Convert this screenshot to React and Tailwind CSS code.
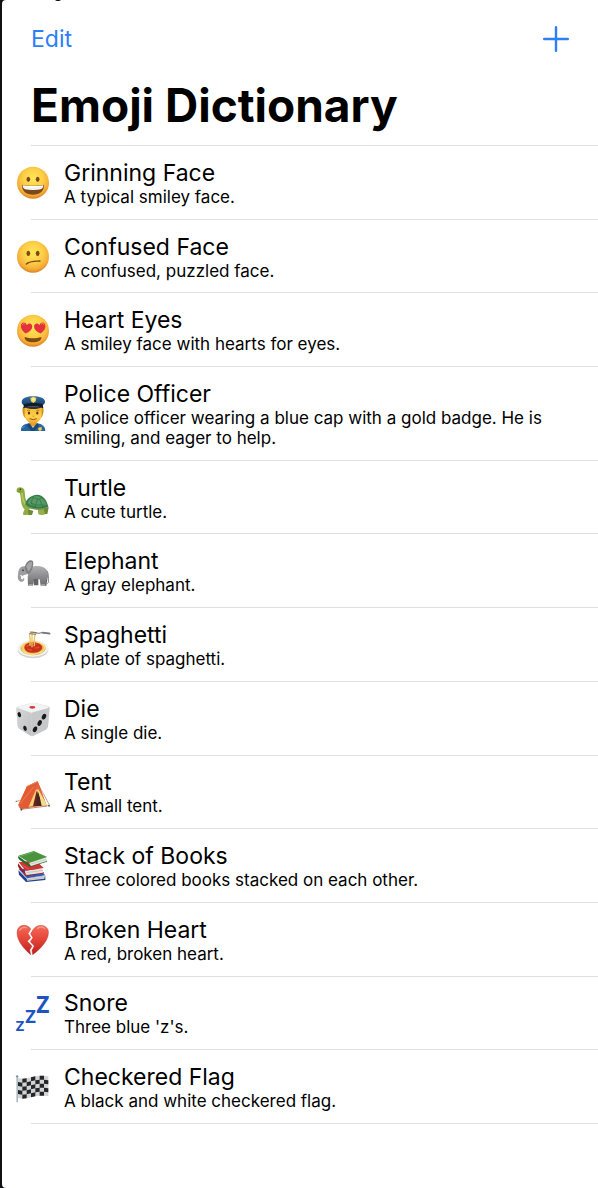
import React from "react";

function FaceBase({ id, children }) {
  return (
    <>
      <defs>
        <radialGradient id={id} cx="50%" cy="38%" r="62%">
          <stop offset="0" stopColor="#ffe65a" />
          <stop offset="0.5" stopColor="#fdcf47" />
          <stop offset="0.82" stopColor="#f5ae38" />
          <stop offset="1" stopColor="#dd8224" />
        </radialGradient>
      </defs>
      <circle cx="54" cy="56" r="48" fill={`url(#${id})`} />
      <g transform="translate(1 1)">{children}</g>
    </>
  );
}

function Grinning() {
  return (
    <FaceBase id="face-grin">
      <ellipse cx="39" cy="45" rx="5.5" ry="8" fill="#7a4a12" />
      <ellipse cx="67" cy="45" rx="5.5" ry="8" fill="#7a4a12" />
      <path d="M20 61C30 65 76 65 86 61C87 80 73 91 53 91C33 91 19 80 20 61Z" fill="#7b4a16" />
      <path d="M22 63C32 66 74 66 84 63C84 70 80 74 76 75C62 78 44 78 30 75C26 74 22 70 22 63Z" fill="#fff" />
      <path d="M22 68C40 73 66 73 84 68" stroke="#d5d7dc" strokeWidth="1.5" fill="none" />
    </FaceBase>
  );
}

function Confused() {
  return (
    <FaceBase id="face-confused">
      <ellipse cx="39" cy="45" rx="5.5" ry="8" fill="#7a4a12" />
      <ellipse cx="67" cy="45" rx="5.5" ry="8" fill="#7a4a12" />
      <path d="M33 77C43 68 60 69 74 68" stroke="#7a4a12" strokeWidth="4" strokeLinecap="round" fill="none" />
    </FaceBase>
  );
}

function HeartEyes() {
  const heart = "M0 17C-12 10-18 2-17-7C-16-16-5-19 0-9C5-19 16-16 17-7C18 2 12 10 0 17Z";
  return (
    <FaceBase id="face-hearts">
      <path d={heart} transform="translate(33 47) rotate(9)" fill="#e3323c" />
      <path d={heart} transform="translate(74 47) rotate(-9)" fill="#e3323c" />
      <path d="M21 38C23 32 28 33 29 36M77 36C81 31 86 33 86 38" stroke="#ff716c" strokeWidth="3" fill="none" />
      <path d="M28 74C42 79 64 79 78 74C79 84 68 90 53 90C38 90 27 84 28 74Z" fill="#804b13" />
    </FaceBase>
  );
}

function Police() {
  return (
    <>
      <defs>
        <linearGradient id="cap" x1="0" y1="0" x2="0" y2="1">
          <stop offset="0" stopColor="#326fa8" />
          <stop offset="1" stopColor="#173b66" />
        </linearGradient>
        <linearGradient id="skin" x1="0" y1="0" x2="0" y2="1">
          <stop offset="0" stopColor="#f5b72d" />
          <stop offset="0.6" stopColor="#ffd34c" />
          <stop offset="1" stopColor="#eaa12e" />
        </linearGradient>
      </defs>
      <path d="M24 36C20 48 24 63 31 70H77C84 63 88 48 84 36Z" fill="#d38c1d" />
      <path d="M43 70H66V94H43Z" fill="#d99023" />
      <path d="M18 108C18 94 23 89 42 85L54 98L67 85C85 89 90 94 91 108Z" fill="#26659d" />
      <path d="M42 84L54 101L67 84L72 92L59 108H49L36 92Z" fill="#184979" />
      <path d="M45 82L54 96L64 82Z" fill="#e7a22e" />
      <path d="M29 36H80V58C80 73 68 86 54 86C40 86 29 73 29 58Z" fill="url(#skin)" />
      <path d="M20 21C20 8 38 4 55 4C72 4 90 9 90 21C90 26 84 31 80 33H29C24 30 20 26 20 21Z" fill="url(#cap)" />
      <path d="M27 28C42 23 68 23 83 28L85 40C68 32 42 32 25 40Z" fill="#101b2b" />
      <path d="M30 37C41 33 68 33 80 37C72 44 38 44 30 37Z" fill="#2a3341" />
      <path d="M55 5L64 9L62 19L55 24L48 19L46 9Z" fill="#ffd94c" />
      <circle cx="55" cy="13" r="4" fill="#fff0a0" />
      <path d="M36 47Q41 44 45 47M64 47Q68 44 73 47" stroke="#9c5b12" strokeWidth="2" fill="none" />
      <ellipse cx="42" cy="54" rx="3.5" ry="4.5" fill="#59341b" />
      <ellipse cx="67" cy="54" rx="3.5" ry="4.5" fill="#59341b" />
      <path d="M52 63Q55 65 58 63" stroke="#c47b18" strokeWidth="2" fill="none" />
      <path d="M44 71Q55 77 65 71" stroke="#a84d18" strokeWidth="3" fill="none" />
      <path d="M70 98L80 96V105L75 108L70 105Z" fill="#f5d34d" />
      <path d="M19 98L29 95M80 91L87 95" stroke="#7eacd0" strokeWidth="2" />
    </>
  );
}

function Turtle() {
  return (
    <g transform="translate(0 2)">
      <path d="M36 87L55 94L51 106H38ZM79 82L101 84L97 103L81 104Z" fill="#6f8834" />
      <path d="M7 25C14 20 25 23 28 31C31 42 28 58 38 69L47 85L38 92L41 103Q36 108 24 105Q24 97 29 89C15 77 20 55 14 40C5 40 2 34 7 25Z" fill="#8eac43" />
      <path d="M68 84L86 87L90 104Q80 108 70 104Z" fill="#94ae49" />
      <path d="M21 40C22 58 26 72 38 82" stroke="#b5c766" strokeWidth="5" fill="none" />
      <path d="M31 76C31 60 46 47 64 45C84 44 97 64 100 82C89 91 48 94 31 76Z" fill="#357c4c" />
      <path d="M38 71C41 59 51 51 64 49C78 50 89 61 95 76C76 85 53 83 38 71Z" fill="#579b61" />
      <path d="M54 53L48 70L59 83M54 53L68 58L62 76L81 76L74 59L78 54M68 58L74 59M48 70L62 76M81 76L92 77M62 76L59 86M81 76L84 86" stroke="#2b7049" strokeWidth="2" fill="none" />
      <path d="M32 77C50 91 82 91 100 82" stroke="#79964d" strokeWidth="4" fill="none" />
      <circle cx="16" cy="29" r="2.5" fill="#292e12" />
      <path d="M7 34L17 36" stroke="#61782a" strokeWidth="2" />
    </g>
  );
}

function Elephant() {
  return (
    <g transform="translate(0 2)">
      <defs>
        <linearGradient id="elephant" x1="0" y1="0" x2="0" y2="1">
          <stop offset="0" stopColor="#b1b1b4" />
          <stop offset="1" stopColor="#6c6c70" />
        </linearGradient>
      </defs>
      <path d="M51 65L70 69V95H57ZM77 65L99 64L94 96H82Z" fill="#626266" />
      <path d="M43 42C58 34 86 34 95 49C101 58 99 71 94 78L91 96H77L74 77L56 76L54 96H39L38 70Z" fill="url(#elephant)" />
      <path d="M31 38C16 36 10 46 9 63C6 75 12 85 22 84C29 82 30 74 25 73C26 78 18 79 18 73C19 67 25 65 30 63L43 60Z" fill="#9d9da0" />
      <path d="M30 37C35 21 48 16 54 23C57 35 51 54 41 61C31 56 28 45 30 37Z" fill="#7f7f82" />
      <path d="M34 38C38 27 46 22 51 26C52 37 47 48 40 54Z" fill="#a6a6a9" />
      <path d="M17 64L22 72L27 67" stroke="#fff8e4" strokeWidth="4" fill="none" />
      <circle cx="24" cy="50" r="2.5" fill="#29292b" />
      <path d="M96 52Q102 60 100 87L97 90" stroke="#707073" strokeWidth="2.5" fill="none" />
      <path d="M41 94H53M79 94H90" stroke="#d1cfcb" strokeWidth="3" />
    </g>
  );
}

function Spaghetti() {
  return (
    <>
      <ellipse cx="54" cy="71" rx="46" ry="26" fill="#cfd2d6" />
      <ellipse cx="54" cy="67" rx="46" ry="25" fill="#f2f3f4" />
      <ellipse cx="54" cy="67" rx="38" ry="21" fill="#e8bd51" />
      <path d="M18 63Q29 46 50 48M20 72Q36 88 58 86M28 78Q55 93 82 75M60 48Q89 52 89 67M24 59Q20 71 34 80M75 82Q90 76 88 62" stroke="#ffe38a" strokeWidth="3" fill="none" />
      <path d="M28 65C29 55 39 49 54 49C69 49 81 56 82 65C79 77 65 80 54 80C42 80 30 76 28 65Z" fill="#c93019" />
      <path d="M36 61Q46 51 64 54M40 70L49 73M62 66L71 64" stroke="#e04c2c" strokeWidth="5" strokeLinecap="round" />
      <path d="M45 60Q47 38 43 24M51 64Q51 43 51 18M58 61Q56 40 61 20" stroke="#ecc65c" strokeWidth="4" fill="none" />
      <path d="M43 25Q52 12 65 24" stroke="#f6d576" strokeWidth="5" fill="none" />
      <path d="M45 18L64 20M43 23L63 25M61 20Q73 24 80 20L104 22" stroke="#707176" strokeWidth="3" fill="none" />
      <path d="M82 20L104 23" stroke="#77787d" strokeWidth="5" strokeLinecap="round" />
    </>
  );
}

function Die() {
  return (
    <>
      <defs>
        <linearGradient id="die-front" x1="0" y1="0" x2="1" y2="1">
          <stop offset="0" stopColor="#d5d6d7" />
          <stop offset="1" stopColor="#bfc1c3" />
        </linearGradient>
      </defs>
      <path d="M11 19L50 9Q56 7 62 9L98 18Q106 20 104 29L99 79Q98 85 92 89L56 107Q51 110 46 107L13 86Q9 83 8 77L4 27Q3 21 11 19Z" fill="#d6d7d8" />
      <path d="M6 22L44 37Q48 39 48 46L49 108L13 86Q9 83 8 77L4 27Z" fill="url(#die-front)" />
      <path d="M49 44Q49 38 55 36L103 22L99 79Q98 85 92 89L55 107Q49 109 49 101Z" fill="#c6c8ca" />
      <path d="M8 20L50 9Q56 7 62 9L101 20Q103 22 97 25L54 37Q48 39 42 36L8 23Z" fill="#f2f3f3" />
      <ellipse cx="52" cy="22" rx="9" ry="4" fill="#d63a3d" />
      <g fill="#171819">
        <ellipse cx="13" cy="44" rx="5" ry="8" transform="rotate(-18 13 44)" />
        <ellipse cx="30" cy="85" rx="5" ry="8" transform="rotate(-18 30 85)" />
        <ellipse cx="87" cy="50" rx="6" ry="9" transform="rotate(25 87 50)" />
        <ellipse cx="74" cy="69" rx="6" ry="9" transform="rotate(25 74 69)" />
        <ellipse cx="60" cy="88" rx="6" ry="9" transform="rotate(25 60 88)" />
      </g>
    </>
  );
}

function Tent() {
  return (
    <>
      <path d="M14 79L2 83M18 105L19 109M97 93L104 97M66 24L104 94" stroke="#a9764f" strokeWidth="2" />
      <path d="M36 37L68 22L94 92L19 105L10 93Z" fill="#d94e29" />
      <path d="M36 37L68 22L45 98L19 104L10 93Z" fill="#e25c33" />
      <path d="M68 22L95 95L41 98Z" fill="#e9623a" />
      <path d="M63 47L41 98L56 96L66 53L83 96L96 94L70 46Z" fill="#f1d378" />
      <path d="M65 50L54 96H77Z" fill="#6e211d" />
      <path d="M68 50L64 96H84Z" fill="#4b221d" />
      <path d="M70 48L80 96L96 93Z" fill="#f4dc88" />
      <path d="M35 38L68 23M14 91L57 37" stroke="#ff8a58" strokeWidth="2" />
      <path d="M12 98L18 106L97 96" stroke="#9b482b" strokeWidth="2" fill="none" />
      <circle cx="19" cy="107" r="2.5" fill="#4c4a4a" />
      <circle cx="102" cy="95" r="2.5" fill="#4c4a4a" />
      <circle cx="4" cy="82" r="2" fill="#70655d" />
    </>
  );
}

function Books() {
  return (
    <>
      <path d="M10 67L35 92L91 83V96L33 102L12 80Z" fill="#223f91" />
      <path d="M35 91L90 83L88 92L36 98Z" fill="#dadcdb" />
      <path d="M11 64L67 58L91 82L36 91Z" fill="#3758b1" />
      <path d="M9 46Q7 54 12 61L32 84L86 76V72L34 77Z" fill="#9c1d20" />
      <path d="M30 68L82 61L84 74L35 81Q29 76 30 68Z" fill="#e8e4dc" />
      <path d="M11 43L62 37L86 60L32 68Z" fill="#d33332" />
      <path d="M10 24Q7 30 14 36L45 57L96 41V37L46 51Z" fill="#246c29" />
      <path d="M43 43L93 29L96 39L48 54Q42 50 43 43Z" fill="#e8e8e1" />
      <path d="M10 23L56 9L97 27L44 44Z" fill="#49943d" />
      <path d="M17 24L55 13M23 52L41 63M17 70L36 83" stroke="#ffffff" strokeOpacity="0.3" strokeWidth="2" />
      <path d="M47 48L94 34M35 74L84 67M37 95L88 88" stroke="#aaa9a5" strokeWidth="1.5" />
    </>
  );
}

function BrokenHeart() {
  return (
    <>
      <defs>
        <linearGradient id="heart" x1="0" y1="0" x2="0" y2="1">
          <stop offset="0" stopColor="#f46c5b" />
          <stop offset="0.5" stopColor="#e44335" />
          <stop offset="1" stopColor="#b81f25" />
        </linearGradient>
      </defs>
      <path d="M47 24C38 9 15 9 8 25C0 48 20 79 47 101L44 87L51 76L37 61L47 50L39 38Z" fill="url(#heart)" stroke="#c9322c" strokeWidth="1.5" />
      <path d="M54 26C65 9 91 9 99 26C106 49 83 80 53 101L51 88L58 75L46 62L54 50L47 38Z" fill="url(#heart)" stroke="#c9322c" strokeWidth="1.5" />
      <path d="M14 27Q21 17 33 20M68 22Q79 14 89 22" stroke="#ff9c88" strokeWidth="4" strokeLinecap="round" fill="none" />
    </>
  );
}

function Snore() {
  return (
    <g fill="#1c55c2" className="font-['Open_Sans',sans-serif] font-bold">
      <text x="2" y="107" fontSize="44">Z</text>
      <text x="31" y="83" fontSize="55">Z</text>
      <text x="64" y="54" fontSize="68">Z</text>
    </g>
  );
}

function CheckeredFlag() {
  const xs = [9, 22, 35, 48, 61, 74, 87, 100];
  const wave = [27, 29, 28, 25, 22, 20, 20, 22];
  const cells = [];
  for (let row = 0; row < 5; row++) {
    for (let col = 0; col < 7; col++) {
      if ((row + col) % 2 === 0) continue;
      const top = row * 12;
      const low = top + 12;
      cells.push(
        `M${xs[col]} ${wave[col] + top}L${xs[col + 1]} ${wave[col + 1] + top}V${wave[col + 1] + low}L${xs[col]} ${wave[col] + low}Z`
      );
    }
  }
  return (
    <>
      <path d="M9 27L22 29L35 28L48 25L61 22L74 20L87 20L100 22V82L87 80H74L61 82L48 85L35 88L22 89L9 87Z" fill="#d3d4d5" />
      <path d={cells.join("")} fill="#252628" />
      <path d="M6.500 22V100" stroke="#9babb5" strokeWidth="4" />
      <circle cx="6.500" cy="22" r="3.500" fill="#82939e" />
    </>
  );
}

const emojis = [
  { name: "Grinning Face", description: "A typical smiley face.", Icon: Grinning },
  { name: "Confused Face", description: "A confused, puzzled face.", Icon: Confused },
  { name: "Heart Eyes", description: "A smiley face with hearts for eyes.", Icon: HeartEyes },
  {
    name: "Police Officer",
    description: "A police officer wearing a blue cap with a gold badge. He is smiling, and eager to help.",
    Icon: Police,
  },
  { name: "Turtle", description: "A cute turtle.", Icon: Turtle },
  { name: "Elephant", description: "A gray elephant.", Icon: Elephant },
  { name: "Spaghetti", description: "A plate of spaghetti.", Icon: Spaghetti },
  { name: "Die", description: "A single die.", Icon: Die },
  { name: "Tent", description: "A small tent.", Icon: Tent },
  { name: "Stack of Books", description: "Three colored books stacked on each other.", Icon: Books },
  { name: "Broken Heart", description: "A red, broken heart.", Icon: BrokenHeart },
  { name: "Snore", description: "Three blue 'z's.", Icon: Snore },
  { name: "Checkered Flag", description: "A black and white checkered flag.", Icon: CheckeredFlag },
];

function EmojiRow({ name, description, Icon }) {
  return (
    <li className="flex grow flex-col">
      <div className="flex grow items-center gap-[13px] pl-[13px] pr-8">
        <svg viewBox="0 0 108 108" className="size-9 shrink-0 overflow-visible" aria-hidden="true">
          <Icon />
        </svg>
        <div className="pt-3 pb-[11px]">
          <h2 className="text-[23px] leading-7">{name}</h2>
          <p className="text-[17px] leading-5">{description}</p>
        </div>
      </div>
      <div className="ml-[29px] border-b border-[#e0e0e1]" />
    </li>
  );
}

export default function App() {
  return (
    <div className="min-h-screen bg-[#101113]">
      <main className="relative ml-0.5 flex min-h-screen flex-col overflow-hidden rounded-l-sm bg-white pb-16 font-[Inter,sans-serif] text-black">
        <div className="absolute -top-1 left-[52px] h-[5px] w-2 rounded-b-full bg-black" />
        <nav className="flex items-center justify-between px-[29px] pt-[21px]">
          <button type="button" className="text-[23px] leading-9 text-[#2c7ff6]">Edit</button>
          <button type="button" aria-label="Add emoji" className="text-[#2c7ff6]">
            <svg viewBox="0 0 26 26" className="size-[26px]" fill="none" stroke="currentColor" strokeWidth="2.4" strokeLinecap="round">
              <path d="M13 1.200V24.800M1.200 13H24.800" />
            </svg>
          </button>
        </nav>
        <h1 className="px-[29px] pt-5 pb-[11px] text-[46px] leading-[57px] font-bold">Emoji Dictionary</h1>
        <ul className="flex grow flex-col">
          <li className="ml-[29px] border-b border-[#e0e0e1]" aria-hidden="true" />
          {emojis.map((emoji) => (
            <EmojiRow key={emoji.name} {...emoji} />
          ))}
        </ul>
      </main>
    </div>
  );
}
